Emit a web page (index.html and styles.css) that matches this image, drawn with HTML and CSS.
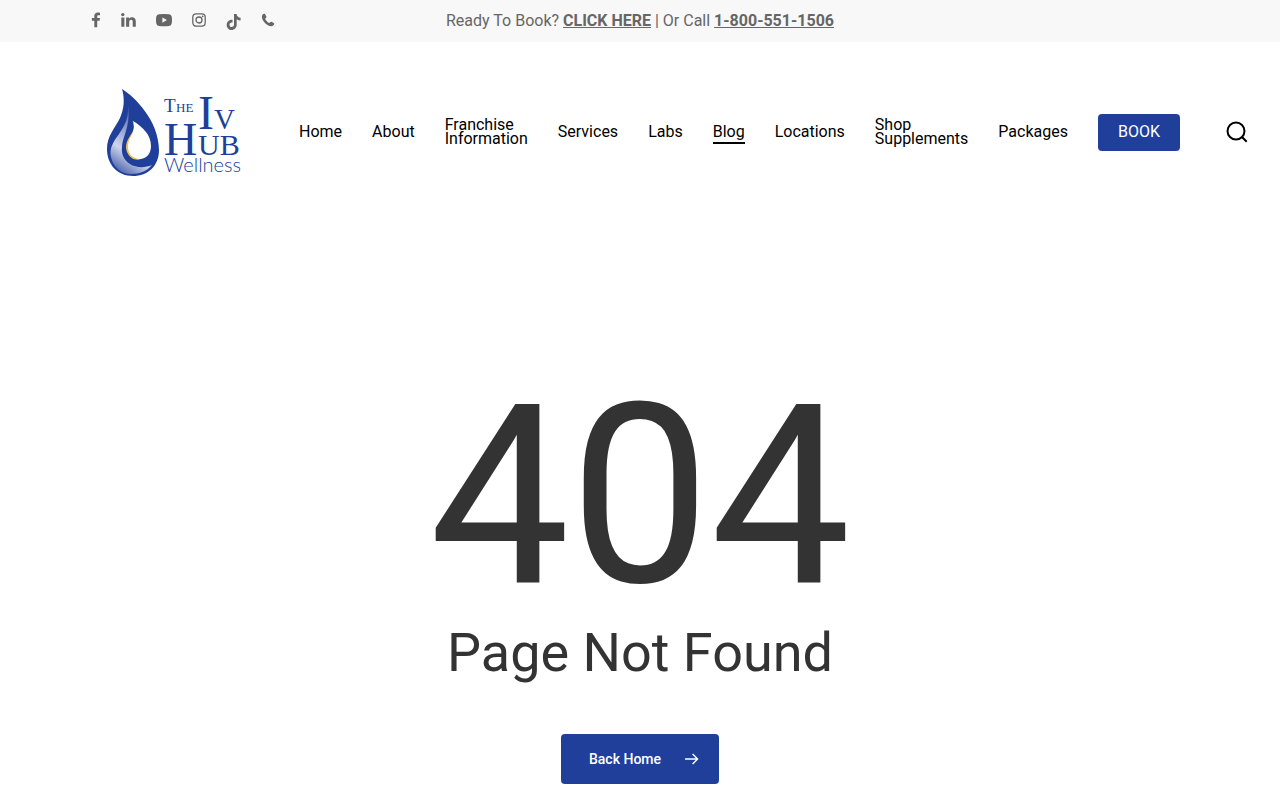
FILE: index.html
```html
<!DOCTYPE html>
<html lang="en">
<head>
<meta charset="utf-8">
<meta name="viewport" content="width=device-width, initial-scale=1">
<title>Page Not Found - The IV Hub Wellness</title>
<link rel="stylesheet" href="styles.css">
</head>
<body>
<div class="topbar">
  <div class="social">
    <a href="#" aria-label="Facebook"><svg width="10" height="20" viewBox="0 0 10 20"><path d="M9 2.700v2.500H7.500C6.400 5.200 6.200 5.700 6.200 6.500V8.100H9l-.4 2.700H6.200V17.200H3.300v-6.400H.9V8.100h2.400V6.100c0-2.300 1.400-3.600 3.500-3.600 1 0 1.900.1 2.200.2z"/></svg></a>
    <a href="#" aria-label="LinkedIn"><svg width="15" height="20" viewBox="0 0 15 20"><path d="M.3 7.500h3.100v9.200H.3zM5.100 7.500h3v1.300c.5-.8 1.300-1.500 2.900-1.500 2.200 0 3.800 1.400 3.800 4.200v5.200h-3.100v-4.900c0-1.300-.4-2.100-1.500-2.100-1.400 0-2 1-2 2.200v4.800H5.100z"/><circle cx="1.800" cy="4.600" r="1.700"/></svg></a>
    <a href="#" aria-label="YouTube"><svg width="16" height="20" viewBox="0 0 16 20"><path fill-rule="evenodd" d="M3 4.300Q8 3.700 13 4.300q2.300.2 2.700 2.300.6 3.500 0 7-.4 2.100-2.700 2.300-5 .5-10 0Q.7 15.700.3 13.600q-.6-3.500 0-7Q.7 4.500 3 4.300zM6.400 7.500v5.200l4.500-2.600z"/></svg></a>
    <a href="#" aria-label="Instagram"><svg width="14" height="20" viewBox="0 0 14 20"><g fill="none" stroke="currentColor" stroke-width="1.300"><rect x=".8" y="3.800" width="12.400" height="12.400" rx="3.400"/><circle cx="7" cy="10" r="3"/></g><circle cx="10.700" cy="6.300" r=".9"/></svg></a>
    <a href="#" aria-label="TikTok"><svg width="15" height="20" viewBox="0 0 15 20"><path d="M8 4h2.600c.1 2.100 1.600 3.600 4 3.800v2.700c-1.500 0-2.800-.4-3.900-1.200v5.200c0 3.100-2.200 5.500-5.100 5.500S.7 17.700.7 14.900c0-3.200 2.600-5.500 5.800-5.100v2.800c-1.700-.4-3 .6-3 2.200 0 1.400 1 2.300 2.200 2.300 1.400 0 2.300-1 2.300-2.500z"/></svg></a>
    <a href="#" aria-label="Phone"><svg width="14" height="20" viewBox="0 0 14 20"><path d="M3.200 3.800c.5-.1.800.2 1.100.8l1 1.900c.3.600.1 1-.4 1.400-.6.500-.9.800-.6 1.300.9 1.600 2 2.700 3.600 3.600.6.300.8 0 1.300-.6.400-.6.800-.7 1.400-.4l2 1.100c.6.300.8.600.6 1.200-.3 1.300-1.600 2.200-3 2.200C6 16.100.900 11 .900 6.800c0-1.500.9-2.800 2.300-3z"/></svg></a>
  </div>
  <p class="notice">Ready To Book? <a href="#">CLICK HERE</a> | Or Call <a href="tel:18005511506">1-800-551-1506</a></p>
</div>

<header class="header">
  <a class="logo" href="#" aria-label="The IV Hub Wellness">
    <svg width="160" height="100" viewBox="0 0 160 100">
      <defs>
        <linearGradient id="shine" x1="0.700" y1="0" x2="0.300" y2="1">
          <stop offset="0" stop-color="#203f9a"/>
          <stop offset=".35" stop-color="#7d8fc6"/>
          <stop offset=".7" stop-color="#cdd5ec"/>
          <stop offset="1" stop-color="#5068ae"/>
        </linearGradient>
      </defs>
      <path fill="#203f9a" d="M32 7C45 15 69 39 69 68c0 16-11 26-26 26S17 83 17 67c0-13 8-21 13-31 4-9 5-19 2-29z"/>
      <path fill="url(#shine)" d="M38 22c1 14-3 21-9 30-6 8-10 15-8 23 2 10 10 17 20 17 9 0 16-3 21-9-7 3-16 3-22-1-6-4-9-10-8-17 1-12 9-21 6-43z"/>
      <path fill="#f2c24b" d="M42 38c3 6 2 11-2 16-4 6-5 11-3 16 3 7 9 9 14 7-8-3-11-10-8-17 3-7 4-14-1-22z"/>
      <path fill="#fff" d="M43 39c10 6 18 14 18 25 0 8-5 13-11 13-7 0-12-5-12-12 0-11 9-14 5-26z"/>
      <g class="logo-text">
        <text x="74" y="30" font-size="19">T</text>
        <text x="86" y="30" font-size="13">HE</text>
        <text x="108" y="47" font-size="48">I</text>
        <text x="124" y="47" font-size="29">V</text>
        <text x="74" y="73" font-size="46">H</text>
        <text x="108" y="73" font-size="30">UB</text>
        <text class="logo-sub" x="74" y="90" font-size="20">Wellness</text>
      </g>
    </svg>
  </a>
  <nav class="nav" aria-label="Main">
    <a href="#">Home</a>
    <a href="#">About</a>
    <a href="#">Franchise<br>Information</a>
    <a href="#">Services</a>
    <a href="#">Labs</a>
    <a href="#" class="current">Blog</a>
    <a href="#">Locations</a>
    <a href="#">Shop<br>Supplements</a>
    <a href="#">Packages</a>
    <a href="#" class="book">BOOK</a>
  </nav>
  <button class="search" type="button" aria-label="Search"><svg width="22" height="22" viewBox="0 0 22 22"><g fill="none" stroke="currentColor" stroke-width="2"><circle cx="10" cy="10" r="8.500"/><path d="M16 16l4.700 4.700"/></g></svg></button>
</header>

<main class="error">
  <h1>404</h1>
  <h2>Page Not Found</h2>
  <a class="home" href="#">Back Home <svg width="14" height="12" viewBox="0 0 14 12"><path fill="none" stroke="currentColor" stroke-width="1.400" d="M0 6h12.600M7.600 1l5 5-5 5"/></svg></a>
</main>
</body>
</html>
```
FILE: styles.css
```css
* {
  box-sizing: border-box;
}

body {
  margin: 0;
  background: #fff;
  color: #333;
  font-family: Roboto, "Liberation Sans", sans-serif;
}

a {
  color: inherit;
  text-decoration: none;
}

svg {
  display: block;
  fill: currentColor;
}

.topbar {
  display: grid;
  grid-template-columns: 1fr auto 1fr;
  align-items: center;
  min-height: 42px;
  padding: 0 91px;
  background: #f8f8f8;
  color: #666;
}

.social {
  display: flex;
  gap: 20px;
  padding-bottom: 2px;
}

.notice {
  margin: 0;
  font-size: 16px;
  line-height: 24px;
}

.notice a {
  font-weight: 700;
  text-decoration: underline;
}

.header {
  display: flex;
  align-items: center;
  padding: 40px 32px 40px 90px;
  color: #000;
}

.logo-text {
  fill: #203f9a;
  font-family: "Liberation Serif", serif;
}

.logo-sub {
  font-family: Lato, sans-serif;
  font-weight: 300;
}

.nav {
  display: flex;
  align-items: center;
  gap: 30px;
  margin: 0 46px 0 auto;
  font-size: 16px;
  line-height: 14px;
}

.current {
  padding: 5px 0 3px;
  border-bottom: 2px solid #000;
}

.book {
  padding: 11px 20px 12px;
  border-radius: 4px;
  background: #203f9a;
  color: #fff;
}

.search {
  padding: 0;
  border: 0;
  background: none;
  color: #000;
}

.error {
  display: flex;
  flex-direction: column;
  align-items: center;
  padding: 150px 24px 16px;
}

.error h1 {
  margin: 0;
  font-size: 250px;
  font-weight: 400;
  line-height: 1;
}

.error h2 {
  margin: 0 0 50px;
  font-size: 54px;
  font-weight: 400;
  line-height: 62px;
}

.home {
  display: flex;
  align-items: center;
  gap: 24px;
  padding: 15px 20px 15px 28px;
  border-radius: 4px;
  background: #203f9a;
  color: #fff;
  font-size: 14px;
  font-weight: 500;
  line-height: 20px;
}
```
